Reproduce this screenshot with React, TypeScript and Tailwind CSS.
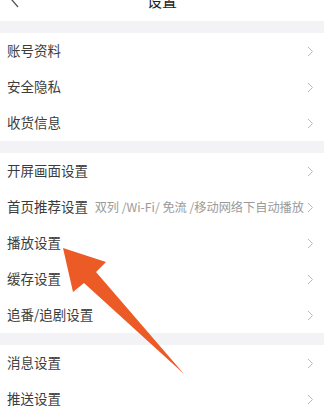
import React from "react";

const font = { fontFamily: '"Noto Sans CJK SC", "Noto Sans", sans-serif' };

function Chevron() {
  return (
    <svg width="7" height="11" viewBox="0 0 7 11" className="shrink-0">
      <path d="M1 1 L5.5 5.5 L1 10" fill="none" stroke="#b8b8b8" strokeWidth="1" />
    </svg>
  );
}

function Row({ label, sub }: { label: string; sub?: string }) {
  return (
    <div className="h-[36px] flex items-center bg-white pl-[7px] pr-[10px]">
      <span className="text-[13.5px] text-[#3c3c3c] leading-none whitespace-nowrap">{label}</span>
      <div className="flex-1" />
      {sub && (
        <span className="text-[12.2px] text-[#9a9a9a] leading-none whitespace-nowrap mr-[3px]">{sub}</span>
      )}
      <Chevron />
    </div>
  );
}

function Band() {
  return <div className="h-[12px] bg-[#f3f3f5]" />;
}

export default function App() {
  return (
    <div className="w-[324px] h-[409px] overflow-hidden bg-white relative" style={font}>
      <div className="h-[21px] overflow-hidden bg-white">
        <div className="h-[42px] -mt-[21px] flex items-center justify-center relative">
          <svg width="10" height="16" viewBox="0 0 10 16" className="absolute left-[10px]">
            <path d="M8 1 L2 8 L8 15" fill="none" stroke="#555" strokeWidth="1.3" />
          </svg>
          <span className="text-[15px] text-[#222] leading-none">设置</span>
        </div>
      </div>
      <Band />
      <Row label="账号资料" />
      <Row label="安全隐私" />
      <Row label="收货信息" />
      <Band />
      <Row label="开屏画面设置" />
      <Row label="首页推荐设置" sub="双列 /Wi-Fi/ 免流 /移动网络下自动播放" />
      <Row label="播放设置" />
      <Row label="缓存设置" />
      <Row label="追番/追剧设置" />
      <Band />
      <Row label="消息设置" />
      <Row label="推送设置" />
      <svg width="324" height="409" viewBox="0 0 324 409" className="absolute left-0 top-0 pointer-events-none">
        <polygon points="63,248 106,262 96,272 184,374 84,283 73,292" fill="#ec5a26" />
      </svg>
    </div>
  );
}
